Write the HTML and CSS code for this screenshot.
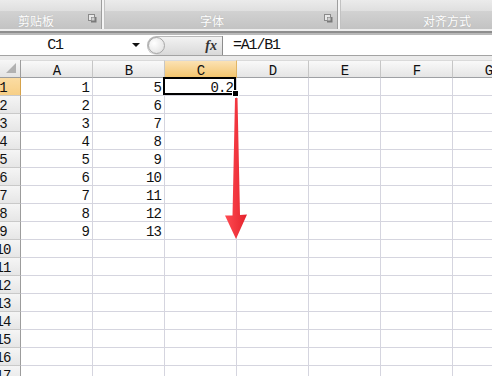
FILE: index.html
```html
<!DOCTYPE html>
<html>
<head>
	<meta charset="utf-8">
	<title>Book1</title>
	<link rel="stylesheet" href="styles.css">
	<script>
	function drawSheet() {
		var cols = ['A', 'B', 'C', 'D', 'E', 'F', 'G'];
		var ret = new Array;
		ret[ret.length] = '<div class="corner"></div>';
		for (var c=0; c<cols.length; c++) {
			ret[ret.length] = '<div class="ch' + (c == 2 ? ' on' : '') + '">' + cols[c] + '</div>';
		}
		for (var r=1; r<=17; r++) {
			ret[ret.length] = '<div class="rh' + (r == 1 ? ' on' : '') + '">' + r + '</div>';
			for (var c=0; c<cols.length; c++) {
				var val = '';
				if (r <= 9 && c == 0) val = r;
				if (r <= 9 && c == 1) val = r + 4;
				if (r == 1 && c == 2) val = '0.2';
				ret[ret.length] = '<div class="cell' + (r == 1 && c == 2 ? ' sel' : '') + '">' + val + '</div>';
			}
		}
		document.getElementById('grid').innerHTML = ret.join('');
	}
	</script>
</head>
<body onload="drawSheet();">

<div class="ribbon">
	<div class="group g1">
		<div class="gtop"></div>
		<div class="glabel"><span>剪贴板</span><svg class="launcher" width="9" height="9" viewBox="0 0 9 9"><rect x="0.5" y="0.5" width="6" height="6" fill="#e8e8e8" stroke="#8a8a8a"/><rect x="3" y="3" width="5.5" height="5.5" fill="#7a7a7a"/><rect x="3.5" y="3.5" width="3" height="3" fill="#d0d0d0"/></svg></div>
	</div>
	<div class="gsep"></div>
	<div class="group g2">
		<div class="gtop"></div>
		<div class="glabel"><span>字体</span><svg class="launcher" width="9" height="9" viewBox="0 0 9 9"><rect x="0.5" y="0.5" width="6" height="6" fill="#e8e8e8" stroke="#8a8a8a"/><rect x="3" y="3" width="5.5" height="5.5" fill="#7a7a7a"/><rect x="3.5" y="3.5" width="3" height="3" fill="#d0d0d0"/></svg></div>
	</div>
	<div class="gsep"></div>
	<div class="group g3">
		<div class="gtop"></div>
		<div class="glabel"><span>对齐方式</span></div>
	</div>
</div>
<div class="ribbonEdge"></div>

<div class="formulaBar">
	<div class="nameBox">C1</div>
	<span class="nameDrop"></span>
	<div class="fxPill"><span class="knob"></span><span class="fx">fx</span></div>
	<div class="formula">=A1/B1</div>
</div>
<div class="sheetGap"></div>

<div class="sheet">
	<div id="grid" class="grid"></div>
</div>

<svg class="arrow" width="492" height="376" viewBox="0 0 492 376">
	<defs>
		<linearGradient id="red" x1="0" y1="0" x2="1" y2="0">
			<stop offset="0" stop-color="#ff4b52"/>
			<stop offset="1" stop-color="#e4222c"/>
		</linearGradient>
	</defs>
	<polygon points="235,98 237.5,98 240,215 247,214.5 236,239 225,215.5 232.5,215.5" fill="url(#red)"/>
</svg>

</body>
</html>
```

FILE: styles.css
```css
body {
	margin: 0;
	width: 492px;
	height: 376px;
	overflow: hidden;
	position: relative;
	background-color: #fff;
	font-family: "Liberation Mono", "DejaVu Sans Mono", monospace;
}

/* ribbon */
.ribbon {
	display: flex;
	height: 29px;
}
.group {
	display: flex;
	flex-direction: column;
}
.g1 { width: 101px; }
.g2 { width: 232px; }
.g3 { flex: 1; }
.gtop {
	height: 11px;
	background: linear-gradient(#ebebeb, #dfdfdf);
}
.glabel {
	height: 18px;
	display: flex;
	align-items: center;
	background: linear-gradient(#d2d2d2, #c3c3c3);
	color: #fff;
	font-family: "Noto Sans CJK SC", sans-serif;
	font-size: 12px;
	text-shadow: 0 0 1px #a8a8a8;
}
.g1 .glabel { padding-left: 18px; }
.g2 .glabel { padding-left: 95px; }
.g3 .glabel { padding-left: 82px; }
.launcher {
	margin-left: auto;
	margin-right: 4px;
	margin-bottom: 3px;
}
.gsep {
	width: 2px;
	border-left: 1px solid #9e9e9e;
	border-right: 1px solid #c2c2c2;
	background-color: #f5f5f5;
}
.ribbonEdge {
	height: 6px;
	background: linear-gradient(#ededed 0 2px, #8e8e8e 2px 4px, #b9b9b9 4px 6px);
}

/* formula bar */
.formulaBar {
	height: 20px;
	display: flex;
	align-items: center;
	border-bottom: 1px solid #a3a3a3;
	background-color: #fff;
	font-size: 15px;
	letter-spacing: -1.2px;
	color: #111;
}
.nameBox {
	width: 110px;
	text-align: center;
	padding-top: 1px;
}
.nameDrop {
	margin-left: 22px;
	width: 0;
	height: 0;
	border-left: 4px solid transparent;
	border-right: 4px solid transparent;
	border-top: 4px solid #111;
}
.fxPill {
	margin-left: 7px;
	align-self: flex-end;
	width: 75px;
	height: 19px;
	display: flex;
	align-items: center;
	border-radius: 10px 0 0 10px;
	border-right: 1px solid #8c8c8c;
	background: linear-gradient(#f4f4f4, #d9d9d9);
	box-shadow: inset 1px 1px 0 #b8b8b8;
}
.knob {
	width: 15px;
	height: 15px;
	margin-left: 1px;
	border-radius: 50%;
	border: 1px solid #a7a7a7;
	background: radial-gradient(circle at 35% 35%, #fff, #dcdcdc);
}
.fx {
	margin-left: auto;
	margin-right: 5px;
	font-family: "Liberation Serif", serif;
	font-style: italic;
	font-weight: bold;
	font-size: 14px;
	letter-spacing: 0;
	color: #333;
}
.formula {
	padding-left: 10px;
	padding-top: 1px;
}
.sheetGap {
	height: 4px;
	background-color: #ebebeb;
}

/* sheet */
.grid {
	margin-left: -14px;
	display: grid;
	grid-template-columns: 35px repeat(7, 72px);
	grid-auto-rows: 18px;
	font-size: 14px;
	line-height: 13px;
	letter-spacing: -0.9px;
	color: #111;
}
.grid > div {
	box-sizing: border-box;
	white-space: nowrap;
}
.corner {
	position: relative;
	background: linear-gradient(#f7f7f7, #e3e3e3);
	border-right: 1px solid #9c9c9c;
	border-bottom: 1px solid #9c9c9c;
}
.corner::after {
	content: "";
	position: absolute;
	right: 4px;
	bottom: 4px;
	border-left: 10px solid transparent;
	border-bottom: 10px solid #b1b1b1;
}
.ch {
	text-align: center;
	padding-top: 4px;
	background: linear-gradient(#f9f9f9, #e5e5e5);
	border-top: 1px solid #dadada;
	border-right: 1px solid #c6c6c6;
	border-bottom: 1px solid #9ea0a4;
}
.rh {
	text-align: center;
	padding-top: 4px;
	background: linear-gradient(#f5f5f5, #e6e6e6);
	border-right: 1px solid #9c9c9c;
	border-bottom: 1px solid #c9c9c9;
}
.ch.on {
	background: linear-gradient(#fbe2b4, #f3c56e);
	border-bottom-color: #d6a24a;
	border-right-color: #e0b566;
}
.rh.on {
	background: linear-gradient(#fbdca3, #f7cf86);
	border-right-color: #d6a24a;
}
.cell {
	text-align: right;
	padding: 4px 3px 0 0;
	border-right: 1px solid #d5d5df;
	border-bottom: 1px solid #d5d5df;
}
.sel {
	position: relative;
}
.sel::before {
	content: "";
	position: absolute;
	left: -2px;
	top: -1px;
	right: 0;
	bottom: 0;
	border: 2px solid #000;
}
.sel::after {
	content: "";
	position: absolute;
	right: -3px;
	bottom: -2px;
	width: 5px;
	height: 5px;
	background-color: #000;
	border: 1px solid #fff;
}

.arrow {
	position: absolute;
	left: 0;
	top: 0;
	pointer-events: none;
}
```
